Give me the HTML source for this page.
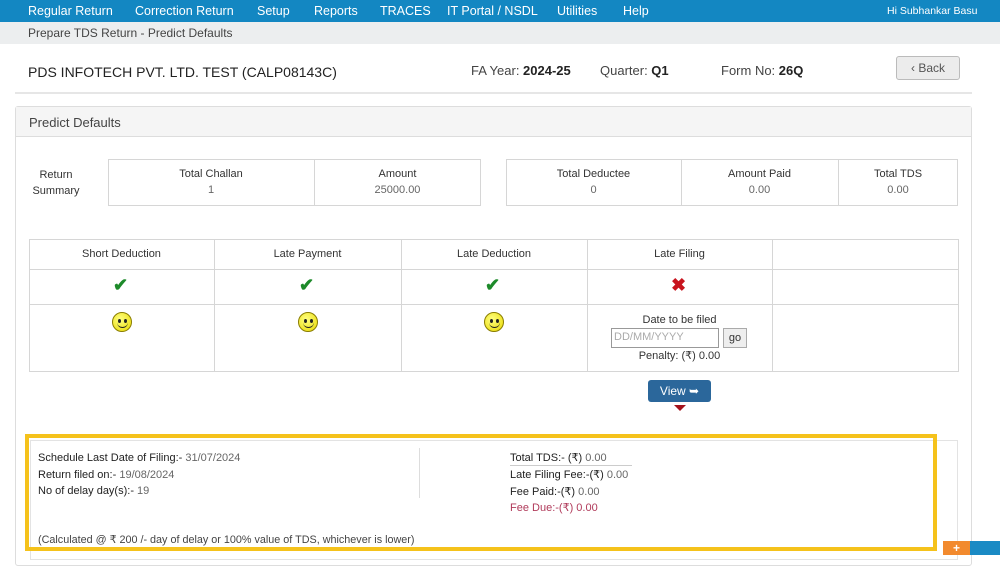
<!DOCTYPE html>
<html><head><meta charset="utf-8"><style>
*{margin:0;padding:0;box-sizing:border-box}
body{width:1000px;height:555px;overflow:hidden;background:#fff;font-family:"Liberation Sans",sans-serif;color:#333;position:relative;font-size:12px}
.a{position:absolute;white-space:nowrap}
.nav{left:0;top:0;width:1000px;height:22px;background:#1387c2}
.nav span{position:absolute;top:4px;color:#fff;font-size:12.5px}
.bc{left:0;top:22px;width:1000px;height:22px;background:#eceeef}
.b{border:1px solid #d6d6d6}
.c{text-align:center;font-size:11px;line-height:16px}
.g{color:#666}
.smile{position:absolute;width:20px;height:20px;border-radius:50%;background:radial-gradient(circle at 40% 35%,#ffff80,#e8d800);border:1px solid #8a7d00}
.smile:before,.smile:after{content:"";position:absolute;top:6px;width:3px;height:4px;border-radius:50%;background:#222}
.smile:before{left:5px}.smile:after{left:11px}
.smile i{position:absolute;left:4px;top:9px;width:11px;height:6px;border-bottom:1.5px solid #222;border-radius:0 0 6px 6px}
.ck{position:absolute;color:#1d8a2a;font-size:18px;font-weight:bold}
</style></head><body>
<div class="a nav">
<span style="left:28px">Regular Return</span><span style="left:135px">Correction Return</span><span style="left:257px">Setup</span><span style="left:314px">Reports</span><span style="left:380px">TRACES</span><span style="left:447px">IT Portal / NSDL</span><span style="left:557px">Utilities</span><span style="left:623px">Help</span><span style="left:887px;top:5px;font-size:10.5px">Hi Subhankar Basu</span>
</div>
<div class="a bc"><span class="a" style="left:28px;top:4px;font-size:12px;color:#444">Prepare TDS Return - Predict Defaults</span></div>
<div class="a" style="left:28px;top:64px;font-size:14px;color:#222">PDS INFOTECH PVT. LTD. TEST (CALP08143C)</div>
<div class="a" style="left:471px;top:63px;font-size:13px;color:#444">FA Year: <b style="color:#222">2024-25</b></div>
<div class="a" style="left:600px;top:63px;font-size:13px;color:#444">Quarter: <b style="color:#222">Q1</b></div>
<div class="a" style="left:721px;top:63px;font-size:13px;color:#444">Form No: <b style="color:#222">26Q</b></div>
<div class="a" style="left:896px;top:56px;width:64px;height:24px;border:1px solid #bbb;border-radius:3px;background:#ececec;color:#555;font-size:12px;text-align:center;line-height:22px">&#8249; Back</div>
<div class="a" style="left:15px;top:92px;width:957px;height:2px;background:#e6e6e6"></div>
<div class="a" style="left:15px;top:106px;width:957px;height:460px;border:1px solid #ddd;border-radius:3px"></div>
<div class="a" style="left:16px;top:107px;width:955px;height:30px;background:#f5f5f5;border-bottom:1px solid #ddd"></div>
<div class="a" style="left:29px;top:115px;font-size:13px;color:#444">Predict Defaults</div>
<div class="a c" style="left:30px;top:167px;width:52px">Return<br>Summary</div>
<div class="a b" style="left:108px;top:159px;width:373px;height:47px"></div>
<div class="a" style="left:314px;top:159px;width:1px;height:47px;background:#d6d6d6"></div>
<div class="a c" style="left:108px;top:166px;width:206px">Total Challan<br><span class="g">1</span></div>
<div class="a c" style="left:314px;top:166px;width:167px">Amount<br><span class="g">25000.00</span></div>
<div class="a b" style="left:506px;top:159px;width:452px;height:47px"></div>
<div class="a" style="left:681px;top:159px;width:1px;height:47px;background:#d6d6d6"></div>
<div class="a" style="left:838px;top:159px;width:1px;height:47px;background:#d6d6d6"></div>
<div class="a c" style="left:506px;top:166px;width:175px">Total Deductee<br><span class="g">0</span></div>
<div class="a c" style="left:681px;top:166px;width:157px">Amount Paid<br><span class="g">0.00</span></div>
<div class="a c" style="left:838px;top:166px;width:120px">Total TDS<br><span class="g">0.00</span></div>
<div class="a b" style="left:29px;top:239px;width:930px;height:133px"></div>
<div class="a" style="left:214px;top:239px;width:1px;height:133px;background:#d6d6d6"></div>
<div class="a" style="left:401px;top:239px;width:1px;height:133px;background:#d6d6d6"></div>
<div class="a" style="left:587px;top:239px;width:1px;height:133px;background:#d6d6d6"></div>
<div class="a" style="left:772px;top:239px;width:1px;height:133px;background:#d6d6d6"></div>
<div class="a" style="left:29px;top:269px;width:930px;height:1px;background:#d6d6d6"></div>
<div class="a" style="left:29px;top:304px;width:930px;height:1px;background:#d6d6d6"></div>
<div class="a c" style="left:29px;top:246px;width:185px">Short Deduction</div>
<div class="a c" style="left:214px;top:246px;width:187px">Late Payment</div>
<div class="a c" style="left:401px;top:246px;width:186px">Late Deduction</div>
<div class="a c" style="left:587px;top:246px;width:185px">Late Filing</div>
<div class="ck" style="left:113px;top:275px">&#10004;</div>
<div class="ck" style="left:299px;top:275px">&#10004;</div>
<div class="ck" style="left:485px;top:275px">&#10004;</div>
<div class="ck" style="left:671px;top:275px;color:#c8141e">&#10006;</div>
<div class="smile" style="left:112px;top:312px"><i></i></div>
<div class="smile" style="left:298px;top:312px"><i></i></div>
<div class="smile" style="left:484px;top:312px"><i></i></div>
<div class="a c" style="left:587px;top:312px;width:185px">Date to be filed</div>
<div class="a" style="left:611px;top:328px;width:108px;height:20px;border:1px solid #999;color:#aaa;font-size:11px;padding:2px 2px">DD/MM/YYYY</div>
<div class="a" style="left:723px;top:328px;width:24px;height:20px;border:1px solid #aaa;background:#eee;font-size:11px;text-align:center;line-height:18px">go</div>
<div class="a c" style="left:587px;top:348px;width:185px">Penalty: (&#8377;) 0.00</div>
<div class="a" style="left:648px;top:380px;width:63px;height:22px;background:#2b679b;border-radius:3px;color:#fff;font-size:12px;text-align:center;line-height:22px">View &#10149;</div>
<div class="a" style="left:674px;top:405px;width:0;height:0;border-left:6px solid transparent;border-right:6px solid transparent;border-top:6px solid #a3121c"></div>
<div class="a" style="left:30px;top:440px;width:928px;height:120px;border:1px solid #e3e3e3"></div>
<div class="a" style="left:25px;top:434px;width:912px;height:117px;border:4px solid #f5c21b"></div>
<div class="a" style="left:419px;top:448px;width:1px;height:50px;background:#ddd"></div>
<div class="a" style="left:38px;top:450px;line-height:16.5px;font-size:11px;color:#222">Schedule Last Date of Filing:- <span class="g">31/07/2024</span><br>Return filed on:- <span class="g">19/08/2024</span><br>No of delay day(s):- <span class="g">19</span></div>
<div class="a" style="left:510px;top:450px;line-height:16.8px;font-size:11px;color:#222">Total TDS:- (&#8377;) <span class="g">0.00</span><br>Late Filing Fee:-(&#8377;) <span class="g">0.00</span><br>Fee Paid:-(&#8377;) <span class="g">0.00</span><br><span style="color:#b03a5a">Fee Due:-(&#8377;) 0.00</span></div>
<div class="a" style="left:510px;top:465px;width:122px;height:1px;background:#ccc"></div>
<div class="a" style="left:38px;top:533px;font-size:10.8px;color:#444">(Calculated @ &#8377; 200 /- day of delay or 100% value of TDS, whichever is lower)</div>
<div class="a" style="left:943px;top:541px;width:27px;height:14px;background:#f28a2e;color:#fff;text-align:center;font-weight:bold;line-height:14px">+</div>
<div class="a" style="left:970px;top:541px;width:30px;height:14px;background:#1a8ac4"></div>
</body></html>
